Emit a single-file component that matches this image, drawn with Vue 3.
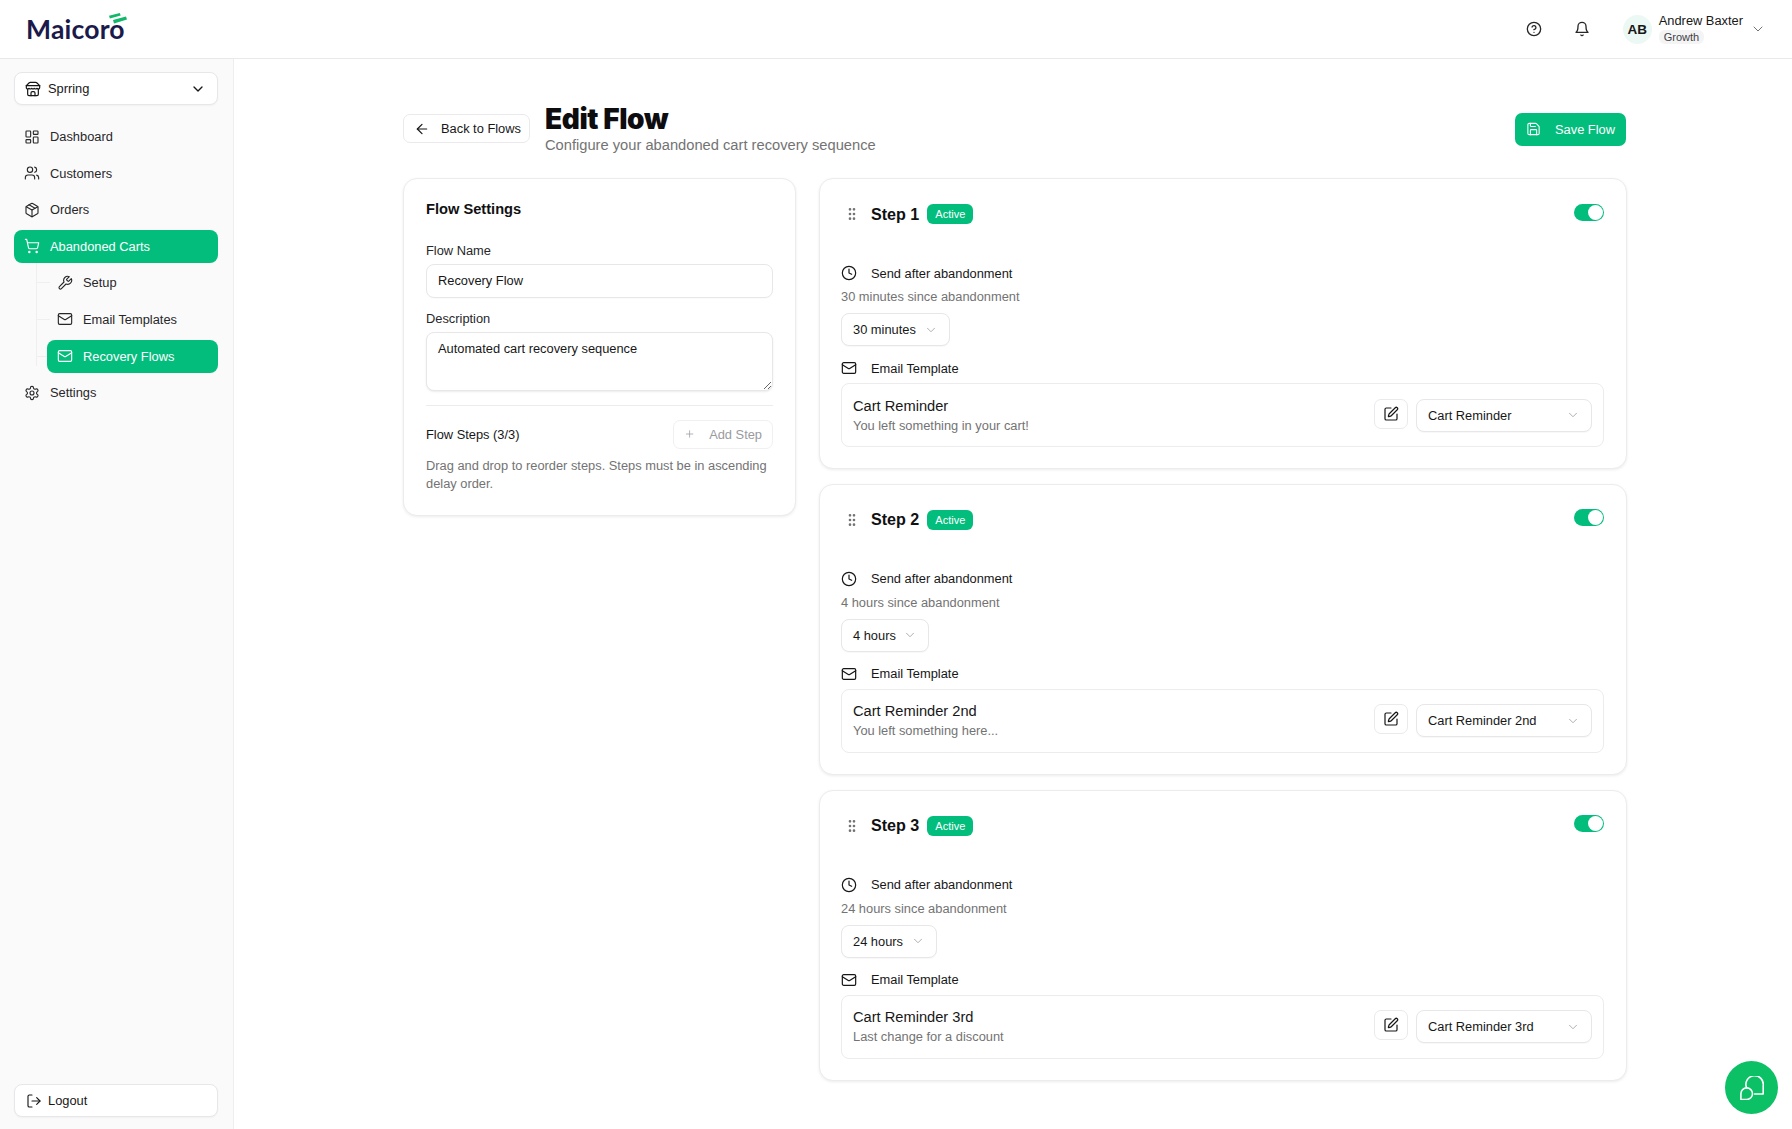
<script setup>
import { h } from 'vue'

const icons = {
  store: '<path d="m2 7 4.41-4.41A2 2 0 0 1 7.83 2h8.34a2 2 0 0 1 1.42.59L22 7"/><path d="M4 12v8a2 2 0 0 0 2 2h12a2 2 0 0 0 2-2v-8"/><path d="M15 22v-4a2 2 0 0 0-2-2h-2a2 2 0 0 0-2 2v4"/><path d="M2 7h20"/><path d="M22 7v3a2 2 0 0 1-2 2a2.7 2.7 0 0 1-1.59-.63.7.7 0 0 0-.82 0A2.7 2.7 0 0 1 16 12a2.7 2.7 0 0 1-1.59-.63.7.7 0 0 0-.82 0A2.7 2.7 0 0 1 12 12a2.7 2.7 0 0 1-1.59-.63.7.7 0 0 0-.82 0A2.7 2.7 0 0 1 8 12a2.7 2.7 0 0 1-1.59-.63.7.7 0 0 0-.82 0A2.7 2.7 0 0 1 4 12a2 2 0 0 1-2-2V7"/>',
  dash: '<rect x="3" y="3" width="7" height="9" rx="1"/><rect x="14" y="3" width="7" height="5" rx="1"/><rect x="14" y="12" width="7" height="9" rx="1"/><rect x="3" y="16" width="7" height="5" rx="1"/>',
  users: '<path d="M16 21v-2a4 4 0 0 0-4-4H6a4 4 0 0 0-4 4v2"/><circle cx="9" cy="7" r="4"/><path d="M22 21v-2a4 4 0 0 0-3-3.87"/><path d="M16 3.13a4 4 0 0 1 0 7.75"/>',
  pkg: '<path d="m7.5 4.27 9 5.15"/><path d="M21 8a2 2 0 0 0-1-1.73l-7-4a2 2 0 0 0-2 0l-7 4A2 2 0 0 0 3 8v8a2 2 0 0 0 1 1.73l7 4a2 2 0 0 0 2 0l7-4A2 2 0 0 0 21 16Z"/><path d="m3.3 7 8.7 5 8.7-5"/><path d="M12 22V12"/>',
  cart: '<circle cx="8" cy="21" r="1"/><circle cx="19" cy="21" r="1"/><path d="M2.05 2.05h2l2.66 12.42a2 2 0 0 0 2 1.58h9.78a2 2 0 0 0 1.95-1.57l1.65-7.43H5.12"/>',
  wrench: '<path d="M14.7 6.3a1 1 0 0 0 0 1.4l1.6 1.6a1 1 0 0 0 1.4 0l3.77-3.77a6 6 0 0 1-7.94 7.94l-6.91 6.91a2.12 2.12 0 0 1-3-3l6.91-6.91a6 6 0 0 1 7.94-7.94l-3.76 3.76z"/>',
  mail: '<rect x="2" y="4" width="20" height="16" rx="2"/><path d="m22 7-8.97 5.7a1.94 1.94 0 0 1-2.06 0L2 7"/>',
  gear: '<path d="M12.22 2h-.44a2 2 0 0 0-2 2v.18a2 2 0 0 1-1 1.73l-.43.25a2 2 0 0 1-2 0l-.15-.08a2 2 0 0 0-2.73.73l-.22.38a2 2 0 0 0 .73 2.73l.15.1a2 2 0 0 1 1 1.72v.51a2 2 0 0 1-1 1.74l-.15.09a2 2 0 0 0-.73 2.73l.22.38a2 2 0 0 0 2.73.73l.15-.08a2 2 0 0 1 2 0l.43.25a2 2 0 0 1 1 1.73V20a2 2 0 0 0 2 2h.44a2 2 0 0 0 2-2v-.18a2 2 0 0 1 1-1.73l.43-.25a2 2 0 0 1 2 0l.15.08a2 2 0 0 0 2.73-.73l.22-.39a2 2 0 0 0-.73-2.73l-.15-.08a2 2 0 0 1-1-1.74v-.5a2 2 0 0 1 1-1.74l.15-.09a2 2 0 0 0 .73-2.73l-.22-.38a2 2 0 0 0-2.73-.73l-.15.08a2 2 0 0 1-2 0l-.43-.25a2 2 0 0 1-1-1.73V4a2 2 0 0 0-2-2z"/><circle cx="12" cy="12" r="3"/>',
  help: '<circle cx="12" cy="12" r="10"/><path d="M9.09 9a3 3 0 0 1 5.83 1c0 2-3 3-3 3"/><path d="M12 17h.01"/>',
  bell: '<path d="M6 8a6 6 0 0 1 12 0c0 7 3 9 3 9H3s3-2 3-9"/><path d="M10.3 21a1.94 1.94 0 0 0 3.4 0"/>',
  chev: '<path d="m6 9 6 6 6-6"/>',
  back: '<path d="m12 19-7-7 7-7"/><path d="M19 12H5"/>',
  save: '<path d="M15.2 3a2 2 0 0 1 1.4.6l3.8 3.8a2 2 0 0 1 .6 1.4V19a2 2 0 0 1-2 2H5a2 2 0 0 1-2-2V5a2 2 0 0 1 2-2z"/><path d="M17 21v-7a1 1 0 0 0-1-1H8a1 1 0 0 0-1 1v7"/><path d="M7 3v4a1 1 0 0 0 1 1h7"/>',
  plus: '<path d="M5 12h14"/><path d="M12 5v14"/>',
  grip: '<circle cx="9" cy="12" r="1"/><circle cx="9" cy="5" r="1"/><circle cx="9" cy="19" r="1"/><circle cx="15" cy="12" r="1"/><circle cx="15" cy="5" r="1"/><circle cx="15" cy="19" r="1"/>',
  clock: '<circle cx="12" cy="12" r="10"/><path d="M12 6v6l4 2"/>',
  pen: '<path d="M12 3H5a2 2 0 0 0-2 2v14a2 2 0 0 0 2 2h14a2 2 0 0 0 2-2v-7"/><path d="M18.375 2.625a1 1 0 0 1 3 3l-9.013 9.014a2 2 0 0 1-.853.505l-2.873.84a.5.5 0 0 1-.62-.62l.84-2.873a2 2 0 0 1 .506-.852z"/>',
  logout: '<path d="M9 3H5a2 2 0 0 0-2 2v14a2 2 0 0 0 2 2h4"/><path d="m16 17 5-5-5-5"/><path d="M21 12H9"/>',
  chat: '<path d="M6.5 11.6A8.7 8.7 0 1 1 23.2 9.7V18H14.6"/><path d="M6.7 11.9a5.8 5.8 0 0 1 0 11.6H.9v-5.8a5.8 5.8 0 0 1 5.8-5.8z"/>'
}

const Ic = (props) =>
  h('svg', {
    width: props.s || 16,
    height: props.s || 16,
    viewBox: '0 0 24 24',
    fill: 'none',
    stroke: 'currentColor',
    'stroke-width': props.w || 2,
    'stroke-linecap': 'round',
    'stroke-linejoin': 'round',
    innerHTML: icons[props.n]
  })
Ic.props = ['n', 's', 'w']

const steps = [
  { n: 1, since: '30 minutes since abandonment', delay: '30 minutes', delayW: '109px', title: 'Cart Reminder', sub: 'You left something in your cart!', tpl: 'Cart Reminder' },
  { n: 2, since: '4 hours since abandonment', delay: '4 hours', delayW: '88px', title: 'Cart Reminder 2nd', sub: 'You left something here...', tpl: 'Cart Reminder 2nd' },
  { n: 3, since: '24 hours since abandonment', delay: '24 hours', delayW: '96px', title: 'Cart Reminder 3rd', sub: 'Last change for a discount', tpl: 'Cart Reminder 3rd' }
]
</script>

<template>
  <div class="app">
    <header class="topbar">
      <div class="logo">
        <span class="logo-text">Maicoro</span>
        <svg class="logo-mark" width="18" height="11" viewBox="0 0 18 11"><path d="M0 2.8 10.8 0l.9 2.6L.9 5.4z M4 7 17 3.6l1 3L5 10.6z" fill="#12b76a" /></svg>
      </div>
      <div class="top-right">
        <Ic n="help" class="top-ic" />
        <Ic n="bell" class="top-ic bell" />
        <div class="user">
          <span class="avatar">AB</span>
          <div class="user-text">
            <span class="user-name">Andrew Baxter</span>
            <span class="plan">Growth</span>
          </div>
          <Ic n="chev" class="user-chev" :w="1.5" />
        </div>
      </div>
    </header>

    <div class="body">
      <aside class="sidebar">
        <div class="shop">
          <Ic n="store" :w="1.8" />
          <span class="shop-name">Sprring</span>
          <Ic n="chev" class="shop-chev" />
        </div>
        <nav class="nav">
          <a class="item"><Ic n="dash" :w="1.7" /><span>Dashboard</span></a>
          <a class="item"><Ic n="users" :w="1.7" /><span>Customers</span></a>
          <a class="item"><Ic n="pkg" :w="1.7" /><span>Orders</span></a>
          <a class="item active"><Ic n="cart" :w="1.7" /><span>Abandoned Carts</span></a>
          <div class="subnav">
            <a class="sub"><Ic n="wrench" :w="1.7" /><span>Setup</span></a>
            <a class="sub"><Ic n="mail" :w="1.7" /><span>Email Templates</span></a>
            <a class="sub active"><Ic n="mail" :w="1.7" /><span>Recovery Flows</span></a>
          </div>
          <a class="item"><Ic n="gear" :w="1.7" /><span>Settings</span></a>
        </nav>
        <button class="logout"><Ic n="logout" :w="1.7" /><span>Logout</span></button>
      </aside>

      <main class="main">
        <div class="page-head">
          <button class="back"><Ic n="back" :w="1.8" /><span>Back to Flows</span></button>
          <div class="titles">
            <h1>Edit Flow</h1>
            <p>Configure your abandoned cart recovery sequence</p>
          </div>
          <button class="save"><Ic n="save" :w="1.7" /><span>Save Flow</span></button>
        </div>

        <div class="grid">
          <section class="card settings">
            <h2>Flow Settings</h2>
            <label class="lbl first">Flow Name</label>
            <input class="field name" value="Recovery Flow" readonly />
            <label class="lbl second">Description</label>
            <textarea class="field area" readonly>Automated cart recovery sequence</textarea>
            <hr class="rule" />
            <div class="steps-head">
              <span>Flow Steps (3/3)</span>
              <button class="add"><Ic n="plus" :w="1.6" /><span>Add Step</span></button>
            </div>
            <p class="help">Drag and drop to reorder steps. Steps must be in ascending delay order.</p>
          </section>

          <div class="steps">
            <section v-for="s in steps" :key="s.n" class="card step">
              <div class="step-head">
                <Ic n="grip" class="grip" />
                <span class="step-title">Step {{ s.n }}</span>
                <span class="badge">Active</span>
                <span class="toggle"><i></i></span>
              </div>
              <div class="row send"><Ic n="clock" :w="1.8" /><span>Send after abandonment</span></div>
              <div class="since">{{ s.since }}</div>
              <div class="select delay" :style="{ width: s.delayW }">
                <span>{{ s.delay }}</span>
                <Ic n="chev" class="sel-chev" :s="14" :w="1.5" />
              </div>
              <div class="row tpl-label"><Ic n="mail" :w="1.8" /><span>Email Template</span></div>
              <div class="tpl">
                <div class="tpl-text">
                  <div class="tpl-title">{{ s.title }}</div>
                  <div class="tpl-sub">{{ s.sub }}</div>
                </div>
                <button class="edit"><Ic n="pen" :w="1.8" /></button>
                <div class="select tpl-select">
                  <span>{{ s.tpl }}</span>
                  <Ic n="chev" class="sel-chev" :s="14" :w="1.5" />
                </div>
              </div>
            </section>
          </div>
        </div>
      </main>
    </div>

    <button class="chat"><Ic n="chat" :s="24" :w="1.6" /></button>
  </div>
</template>

<style>
html, body { margin: 0; background: #fff; }
</style>

<style scoped>
* { box-sizing: border-box; }
.app {
  height: 1129px;
  overflow: hidden;
  display: flex;
  flex-direction: column;
  font-family: "Liberation Sans", Arial, sans-serif;
  font-size: 12.85px;
  color: #171717;
  position: relative;
}
button { font: inherit; color: inherit; cursor: pointer; white-space: nowrap; }

.topbar {
  height: 59px;
  flex: none;
  border-bottom: 1px solid #e9e9ea;
  display: flex;
  align-items: center;
  justify-content: space-between;
  padding: 0 26px 0 26px;
}
.logo { position: relative; display: flex; align-items: center; }
.logo-text {
  font-family: Lato, "Noto Sans", sans-serif;
  font-weight: 700;
  font-size: 26.5px;
  letter-spacing: 0.2px;
  color: #1b1a4b;
}
.logo-mark { position: absolute; left: 83px; top: 0; }
.top-right { display: flex; align-items: center; }
.top-ic { color: #27272a; }
.bell { margin-left: 32px; }
.user { display: flex; align-items: center; margin-left: 33px; }
.avatar {
  width: 29px;
  height: 29px;
  border-radius: 50%;
  background: #ecf8f4;
  font-weight: 700;
  font-size: 13.5px;
  display: flex;
  align-items: center;
  justify-content: center;
}
.user-text { display: flex; flex-direction: column; align-items: flex-start; margin-left: 7px; margin-top: -1px; }
.user-name { font-size: 12.85px; line-height: 16px; }
.plan {
  font-size: 11px;
  line-height: 14px;
  padding: 0 5px;
  background: #f4f4f5;
  border-radius: 6px;
  color: #3f3f46;
  margin-top: 1px;
}
.user-chev { color: #737373; margin-left: 7px; }

.body { flex: 1; display: flex; min-height: 0; }
.sidebar {
  width: 234px;
  flex: none;
  background: #fafafa;
  border-right: 1px solid #eeeeef;
  padding: 13px 15px 12px 14px;
  display: flex;
  flex-direction: column;
}
.shop {
  height: 33px;
  background: #fff;
  border: 1px solid #e7e7e9;
  border-radius: 8px;
  box-shadow: 0 1px 2px rgba(0, 0, 0, 0.04);
  display: flex;
  align-items: center;
  padding: 0 11px 0 10px;
  gap: 7px;
}
.shop-chev { margin-left: auto; }
.nav { margin-top: 15px; display: flex; flex-direction: column; gap: 3.6px; }
.item, .sub {
  height: 33px;
  display: flex;
  align-items: center;
  gap: 10px;
  padding: 0 10px;
  border-radius: 8px;
  color: #27272a;
}
.item.active, .sub.active { background: #03bd7d; color: #fff; }
.subnav {
  display: flex;
  flex-direction: column;
  gap: 3.6px;
  margin-left: 33px;
  position: relative;
}
.subnav::before {
  content: "";
  position: absolute;
  left: -11px;
  top: -3px;
  bottom: 7px;
  width: 1px;
  background: #efeff0;
}
.sub::before {
  content: "";
  position: absolute;
  left: -11px;
  width: 14px;
  height: 1px;
  background: #efeff0;
}
.sub { position: relative; }
.sub::before { top: 16px; }
.sub.active::before { width: 11px; }
.logout {
  margin-top: auto;
  height: 33px;
  background: #fff;
  border: 1px solid #e7e7e9;
  border-radius: 8px;
  box-shadow: 0 1px 2px rgba(0, 0, 0, 0.04);
  display: flex;
  align-items: center;
  gap: 6px;
  padding: 0 11px;
}

.main { flex: 1; padding: 30px 0 0 169px; min-width: 0; }
.page-head { display: flex; align-items: center; height: 79px; width: 1223px; margin-bottom: 10px; }
.back {
  height: 29px;
  width: 127px;
  background: #fff;
  border: 1px solid #eaeaec;
  border-radius: 7px;
  display: flex;
  align-items: center;
  gap: 11px;
  padding: 0 8px 0 10px;
  flex: none;
}
.titles { margin-left: 15px; margin-top: -1px; }
h1 {
  margin: 0;
  font-family: Inter, sans-serif;
  font-weight: 900;
  font-size: 28px;
  line-height: 34px;
  color: #0d0d0f;
  letter-spacing: -0.4px;
}
.titles p { margin: 0; font-size: 14.7px; line-height: 19px; color: #737373; }
.save {
  margin-left: auto;
  height: 33px;
  width: 111px;
  background: #03bd7d;
  color: #fff;
  border: 0;
  border-radius: 7px;
  display: flex;
  align-items: center;
  gap: 14px;
  padding: 0 11px;
  flex: none;
  margin-top: 1px;
}

.grid { display: grid; grid-template-columns: 393px 808px; gap: 23px; align-items: start; }
.card {
  background: #fff;
  border: 1px solid #ececee;
  border-radius: 14px;
  box-shadow: 0 1px 3px rgba(0, 0, 0, 0.08);
}
.settings { padding: 20.5px 22px 22.5px; }
h2 { margin: 0; font-size: 14.65px; line-height: 18px; font-weight: 700; color: #111113; }
.lbl { display: block; line-height: 16px; color: #27272a; }
.lbl.first { margin-top: 25px; }
.lbl.second { margin-top: 13.5px; }
.field {
  display: block;
  width: 100%;
  height: 34px;
  margin-top: 5px;
  border: 1px solid #e7e7e9;
  border-radius: 8px;
  padding: 0 11px;
  font: inherit;
  color: #171717;
  background: #fff;
  outline: none;
  box-shadow: 0 1px 1px rgba(0, 0, 0, 0.02);
}
.field.name { margin-top: 5px; }
.area { height: 58.5px; padding: 8px 11px; line-height: 16px; resize: vertical; box-shadow: 0 1px 2px rgba(0,0,0,0.08); }
.rule { border: 0; border-top: 1px solid #ececee; margin: 14px 0 14px; }
.steps-head { display: flex; align-items: center; justify-content: space-between; }
.add {
  width: 100px;
  height: 29px;
  background: #fff;
  border: 1px solid #f0f0f1;
  border-radius: 7px;
  display: flex;
  align-items: center;
  gap: 14px;
  padding: 0 10px;
  color: #9a9aa1;
}
.help { margin: 8px 0 0; line-height: 18px; color: #737373; }

.steps { display: flex; flex-direction: column; gap: 14.9px; }
.step { height: 291px; padding: 25px 22px 0 21px; }
.step-head { display: flex; align-items: center; height: 20px; position: relative; }
.grip { color: #737373; margin-left: 3px; }
.step-title { font-size: 16.1px; font-weight: 700; margin-left: 11px; color: #111113; }
.badge {
  background: #03bd7d;
  color: #fff;
  font-size: 11px;
  height: 20px;
  line-height: 20px;
  padding: 0 8px;
  border-radius: 6px;
  margin-left: 8px;
}
.toggle {
  margin-left: auto;
  width: 30px;
  height: 17px;
  border-radius: 9px;
  background: #03bd7d;
  position: relative;
  margin-top: -4px;
}
.toggle i {
  position: absolute;
  right: 1px;
  top: 1px;
  width: 15px;
  height: 15px;
  border-radius: 50%;
  background: #fff;
}
.row { display: flex; align-items: center; gap: 14px; height: 20px; }
.send { margin-top: 39px; }
.since { margin-top: 5px; line-height: 18px; color: #737373; }
.select {
  height: 33px;
  background: #fff;
  border: 1px solid #e7e7e9;
  border-radius: 8px;
  display: flex;
  align-items: center;
  justify-content: space-between;
  padding: 0 11px;
  box-shadow: 0 1px 1px rgba(0, 0, 0, 0.03);
}
.sel-chev { color: #a1a1aa; }
.delay { margin-top: 7px; }
.tpl-label { margin-top: 12px; }
.tpl {
  margin-top: 5px;
  height: 64px;
  border: 1px solid #ececee;
  border-radius: 8px;
  display: flex;
  align-items: center;
  padding: 0 11px;
}
.tpl-text { flex: 1; }
.tpl-title { font-size: 14.65px; line-height: 20px; }
.tpl-sub { line-height: 18px; color: #737373; margin-top: 1px; }
.edit {
  width: 34px;
  height: 30px;
  background: #fff;
  border: 1px solid #eaeaec;
  border-radius: 7px;
  display: flex;
  align-items: center;
  justify-content: center;
  padding: 0;
  margin-top: -3px;
}
.tpl-select { width: 176px; margin-left: 8px; }

.chat {
  position: absolute;
  left: 1725px;
  top: 1061px;
  width: 53px;
  height: 53px;
  border-radius: 50%;
  border: 0;
  background: #0cc065;
  color: #fff;
  display: flex;
  align-items: center;
  justify-content: center;
  padding: 0;
}
</style>
